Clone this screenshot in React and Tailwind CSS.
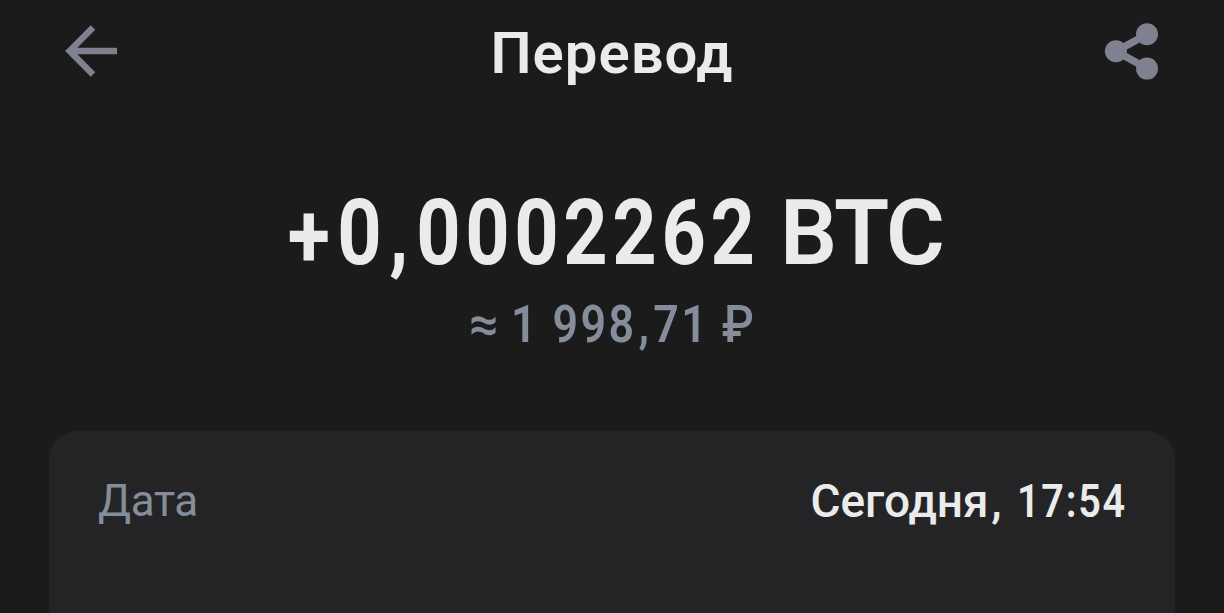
import React from "react";

const detalles = [{ etiqueta: "Дата", fecha: "Сегодня", hora: "17:54" }];

// Flecha de volver
function BackIcon() {
  return (
    <svg width="54" height="54" viewBox="0 0 54 54" fill="none" stroke="#7f8090" strokeWidth="6.4">
      <path d="M29 2.5 L5.6 26 L29 49.5 M6 26 H53" />
    </svg>
  );
}

// Compartir
function ShareIcon() {
  return (
    <svg width="54" height="58" viewBox="0 0 54 58" fill="#7f8090" className="overflow-visible">
      <path d="M10 28.3 L41.2 11.2 M10 28.3 L41.2 45.6" stroke="#7f8090" strokeWidth="7.4" />
      <circle cx="9.9" cy="28.3" r="11" />
      <circle cx="41" cy="11.2" r="11" />
      <circle cx="41" cy="45.6" r="11" />
    </svg>
  );
}

export default function App() {
  return (
    <div className="flex h-[613px] w-[1224px] flex-col overflow-hidden bg-[#1b1b1b] font-['Roboto','Noto_Sans',sans-serif] text-[#ebebeb]">
      {/* Header */}
      <header className="flex h-[104px] items-center justify-between px-16">
        <button aria-label="Назад"><BackIcon /></button>
        <h1 className="pt-[2px] text-[58px] leading-none font-semibold tracking-[1px]">Перевод</h1>
        <button aria-label="Поделиться"><ShareIcon /></button>
      </header>

      {/* Importe */}
      <section className="flex h-[327px] flex-col items-center pt-[84px]">
        <p className="flex text-[90px] leading-[92px] font-semibold whitespace-pre">
          <span className="-ml-[70px] origin-right scale-x-[0.86] font-bold tracking-[0.06em]">
            <span className="mr-[3px] inline-block translate-y-[3px]">+</span>0<span className="px-[0.04em]">,</span>0002262
          </span>
          <span className="tracking-[-2px]"> BTC</span>
        </p>
        <p className="mt-[13px] flex text-[52px] leading-[64px] font-medium whitespace-pre text-[#858d9b]">
          <span>≈ </span>
          <span className="-mr-[32px] origin-left scale-x-[0.86] font-semibold tracking-[0.055em]">
            1 998<span className="px-[0.04em]">,</span>71
          </span>
          <span className="-mr-[3px] origin-left scale-x-[0.9]"> ₽</span>
        </p>
      </section>

      {/* Detalles */}
      <section className="mx-[49px] flex-1 rounded-t-[28px] bg-[#242427] px-[49px] pt-[42px]">
        {detalles.map((d) => (
          <div key={d.etiqueta} className="flex items-center justify-between leading-[56px]">
            <span className="text-[44px] tracking-[-0.4px] text-[#858d9b]">{d.etiqueta}</span>
            <span className="-mr-[1px] flex text-[46px] font-medium whitespace-pre">
              <span>{d.fecha}<span className="pl-[0.06em]">, </span></span>
              <span className="-ml-[14px] origin-right scale-x-[0.86] font-semibold tracking-[0.045em]">{d.hora}</span>
            </span>
          </div>
        ))}
      </section>
    </div>
  );
}
